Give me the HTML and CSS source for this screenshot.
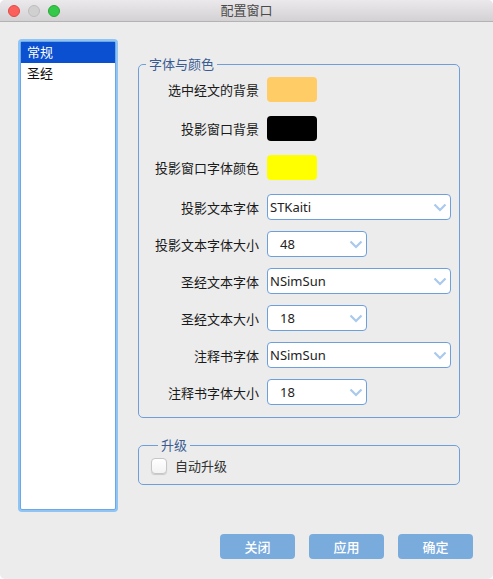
FILE: index.html
```html
<!DOCTYPE html>
<html lang="zh-CN">
<head>
    <meta charset="UTF-8">
    <meta name="viewport" content="width=device-width, initial-scale=1.0">
    <title>配置窗口</title>
    <link rel="stylesheet" href="styles.css">
</head>
<body>
    <div class="window">
        <div class="titlebar">
            <div class="lights">
                <span class="light red"></span>
                <span class="light gray"></span>
                <span class="light green"></span>
            </div>
            <div class="title">配置窗口</div>
        </div>

        <div class="main">
            <ul class="side-list">
                <li class="selected">常规</li>
                <li>圣经</li>
            </ul>

            <div class="panel">
                <fieldset class="group fonts">
                    <legend>字体与颜色</legend>
                    <div class="form-row swatch-row first">
                        <label>选中经文的背景</label>
                        <span class="swatch orange"></span>
                    </div>
                    <div class="form-row swatch-row">
                        <label>投影窗口背景</label>
                        <span class="swatch black"></span>
                    </div>
                    <div class="form-row swatch-row">
                        <label>投影窗口字体颜色</label>
                        <span class="swatch yellow"></span>
                    </div>
                    <div class="form-row select-row gap-big">
                        <label>投影文本字体</label>
                        <div class="select wide">STKaiti
                            <svg class="chevron" width="14" height="9" viewBox="0 0 14 9"><polyline points="1.5,1.5 7,7 12.5,1.5" fill="none" stroke="#a9c9ee" stroke-width="2.2"/></svg>
                        </div>
                    </div>
                    <div class="form-row select-row">
                        <label>投影文本字体大小</label>
                        <div class="select narrow">48
                            <svg class="chevron" width="14" height="9" viewBox="0 0 14 9"><polyline points="1.5,1.5 7,7 12.5,1.5" fill="none" stroke="#a9c9ee" stroke-width="2.2"/></svg>
                        </div>
                    </div>
                    <div class="form-row select-row">
                        <label>圣经文本字体</label>
                        <div class="select wide">NSimSun
                            <svg class="chevron" width="14" height="9" viewBox="0 0 14 9"><polyline points="1.5,1.5 7,7 12.5,1.5" fill="none" stroke="#a9c9ee" stroke-width="2.2"/></svg>
                        </div>
                    </div>
                    <div class="form-row select-row">
                        <label>圣经文本大小</label>
                        <div class="select narrow">18
                            <svg class="chevron" width="14" height="9" viewBox="0 0 14 9"><polyline points="1.5,1.5 7,7 12.5,1.5" fill="none" stroke="#a9c9ee" stroke-width="2.2"/></svg>
                        </div>
                    </div>
                    <div class="form-row select-row">
                        <label>注释书字体</label>
                        <div class="select wide">NSimSun
                            <svg class="chevron" width="14" height="9" viewBox="0 0 14 9"><polyline points="1.5,1.5 7,7 12.5,1.5" fill="none" stroke="#a9c9ee" stroke-width="2.2"/></svg>
                        </div>
                    </div>
                    <div class="form-row select-row">
                        <label>注释书字体大小</label>
                        <div class="select narrow">18
                            <svg class="chevron" width="14" height="9" viewBox="0 0 14 9"><polyline points="1.5,1.5 7,7 12.5,1.5" fill="none" stroke="#a9c9ee" stroke-width="2.2"/></svg>
                        </div>
                    </div>
                </fieldset>

                <fieldset class="group upgrade">
                    <legend>升级</legend>
                    <div class="check-row">
                        <span class="checkbox"></span>
                        <span>自动升级</span>
                    </div>
                </fieldset>
            </div>
        </div>

        <div class="footer">
            <button>关闭</button>
            <button>应用</button>
            <button>确定</button>
        </div>
    </div>
</body>
</html>
```

FILE: styles.css
```css
* {
    box-sizing: border-box;
}

body {
    margin: 0;
    background: #ffffff;
    font-family: "Noto Sans", "Noto Sans CJK SC", sans-serif;
    font-size: 13px;
    color: #1a1a1a;
}

.window {
    width: 493px;
    height: 579px;
    background: #ececec;
    border-radius: 5px;
    overflow: hidden;
    display: flex;
    flex-direction: column;
}

/* title bar */
.titlebar {
    height: 22px;
    flex: none;
    display: flex;
    align-items: center;
    background: linear-gradient(#ebe9eb, #d3d1d3);
    border-bottom: 1px solid #b3b3b3;
    position: relative;
}

.lights {
    display: flex;
    gap: 8px;
    padding-left: 8px;
}

.light {
    width: 12px;
    height: 12px;
    border-radius: 50%;
}

.red {
    background: #fc605c;
    border: 1px solid #de4b46;
}

.gray {
    background: #d1d0d1;
    border: 1px solid #bdbcbd;
}

.green {
    background: #35c94a;
    border: 1px solid #27a936;
}

.title {
    position: absolute;
    left: 0;
    right: 0;
    text-align: center;
    color: #4a4a4a;
    line-height: 21px;
}

/* main area */
.main {
    flex: 1;
    display: flex;
    padding: 19px 0 0 20px;
}

.side-list {
    list-style: none;
    margin: 0;
    padding: 0;
    width: 96px;
    height: 469px;
    background: #fff;
    border: 1px solid #6ea7e3;
    box-shadow: 0 0 0 2px #8ec5f5;
    border-radius: 2px;
}

.side-list li {
    height: 21px;
    line-height: 21px;
    padding-left: 6px;
    color: #111;
}

.side-list li.selected {
    background: #0b50d0;
    color: #fff;
}

.panel {
    width: 322px;
    margin-left: 22px;
    margin-top: 15px;
}

.group {
    margin: 0;
    border: 1px solid #6f9fd9;
    border-radius: 5px;
    min-width: 0;
}

.group legend {
    margin-left: 7px;
    padding: 0 3px;
    line-height: 16px;
    color: #3a5c93;
}

.fonts {
    padding: 5px 0 12px 0;
}

.upgrade {
    margin-top: 19px;
    padding: 3px 0 9px 12px;
}

/* form rows */
.form-row {
    display: flex;
    align-items: center;
    gap: 8px;
}

.form-row label {
    width: 120px;
    text-align: right;
    color: #1a1a1a;
}

.swatch-row {
    height: 25px;
    margin-top: 14px;
}

.swatch-row.first {
    margin-top: 0;
}

.select-row {
    height: 26px;
    margin-top: 11px;
}

.select-row.gap-big {
    margin-top: 14px;
}

.swatch {
    width: 50px;
    height: 25px;
    border-radius: 4px;
}

.orange {
    background: #ffcc66;
}

.black {
    background: #000;
}

.yellow {
    background: #ffff00;
}

.select {
    height: 26px;
    background: #fff;
    border: 1px solid #6d9fdb;
    border-radius: 4px;
    display: flex;
    align-items: center;
    justify-content: space-between;
    color: #222;
    padding-right: 3px;
}

.select.wide {
    width: 184px;
    padding-left: 2px;
}

.select.narrow {
    width: 100px;
    padding-left: 12px;
}

.chevron {
    margin-top: 1px;
}

/* upgrade */
.check-row {
    display: flex;
    align-items: center;
    gap: 8px;
    color: #333;
}

.checkbox {
    width: 16px;
    height: 16px;
    border-radius: 4px;
    background: linear-gradient(#fff, #f3f3f3);
    border: 1px solid #c6c6c6;
    box-shadow: 0 1px 1px rgba(0,0,0,0.15);
}

/* footer buttons */
.footer {
    display: flex;
    justify-content: flex-end;
    gap: 14px;
    padding: 0 20px 20px 0;
}

.footer button {
    width: 75px;
    height: 25px;
    border: none;
    border-radius: 4px;
    background: #7aabdd;
    color: #fff;
    font-family: "Noto Sans", "Noto Sans CJK SC", sans-serif;
    font-size: 13px;
    font-weight: 500;
}
```
